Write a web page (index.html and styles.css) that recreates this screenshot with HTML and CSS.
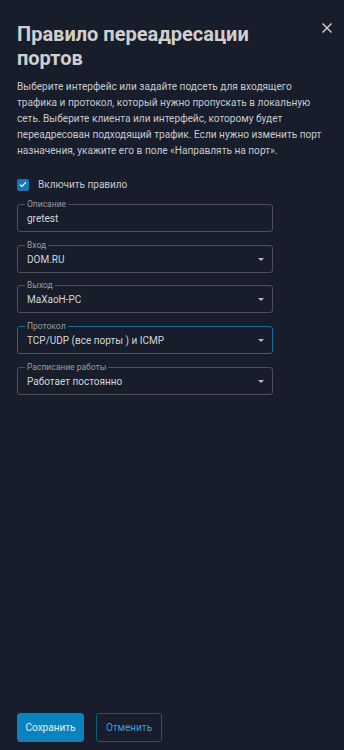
FILE: index.html
```html
<!DOCTYPE html>
<html lang="ru">
<head>
<meta charset="utf-8">
<link rel="stylesheet" href="styles.css">
</head>
<body>
<div class="dialog">
  <button class="close" aria-label="Закрыть">
    <svg width="10" height="10" viewBox="0 0 10 10"><path d="M1 1L9 9M9 1L1 9" stroke="#c9cbd0" stroke-width="1.5" stroke-linecap="square"/></svg>
  </button>
  <h1 class="title">Правило переадресации портов</h1>
  <p class="desc">Выберите интерфейс или задайте подсеть для входящего трафика и протокол, который нужно пропускать в локальную сеть. Выберите клиента или интерфейс, которому будет переадресован подходящий трафик. Если нужно изменить порт назначения, укажите его в поле «Направлять на порт».</p>

  <label class="check">
    <span class="box"><svg width="8" height="7" viewBox="0 0 8 7"><path d="M1 3.6L3 5.5L7 1.2" fill="none" stroke="#fff" stroke-width="1.2"/></svg></span>
    <span class="check-label">Включить правило</span>
  </label>

  <div class="fields">
    <div class="field">
      <span class="legend">Описание</span>
      <span class="value">gretest</span>
    </div>
    <div class="field select">
      <span class="legend">Вход</span>
      <span class="value">DOM.RU</span>
      <span class="arrow"></span>
    </div>
    <div class="field select">
      <span class="legend">Выход</span>
      <span class="value">MaXaoH-PC</span>
      <span class="arrow"></span>
    </div>
    <div class="field select focused">
      <span class="legend">Протокол</span>
      <span class="value">TCP/UDP (все порты ) и ICMP</span>
      <span class="arrow"></span>
    </div>
    <div class="field select">
      <span class="legend">Расписание работы</span>
      <span class="value">Работает постоянно</span>
      <span class="arrow"></span>
    </div>
  </div>

  <div class="spacer"></div>

  <div class="actions">
    <button class="btn primary">Сохранить</button>
    <button class="btn outline">Отменить</button>
  </div>
</div>
</body>
</html>
```

FILE: styles.css
```css
* { box-sizing: border-box; }
html, body {
  margin: 0;
  padding: 0;
  background: #171d2a;
  font-family: Roboto, "Noto Sans", sans-serif;
}
.dialog {
  position: relative;
  height: 750px;
  padding: 22px 17px 8px 17px;
  display: flex;
  flex-direction: column;
}
.close {
  position: absolute;
  top: 23px;
  right: 12px;
  width: 10px;
  height: 10px;
  padding: 0;
  border: 0;
  background: none;
  display: flex;
}
.title {
  margin: 0;
  width: 270px;
  font-size: 20px;
  line-height: 24px;
  font-weight: 700;
  color: #d1cfce;
}
.desc {
  margin: 9px 0 0 0;
  font-size: 10.1px;
  line-height: 16px;
  color: #c9cace;
  width: 312px;
}
.check {
  display: flex;
  align-items: center;
  gap: 9px;
  margin-top: 19.5px;
  height: 12px;
}
.box {
  width: 12px;
  height: 12px;
  border-radius: 2px;
  background: #1777b4;
  display: flex;
  align-items: center;
  justify-content: center;
}
.check-label {
  font-size: 10px;
  color: #c9cace;
}
.fields {
  margin-top: 13.5px;
  display: flex;
  flex-direction: column;
  gap: 12.7px;
  width: 256px;
}
.field {
  position: relative;
  height: 28px;
  border: 1px solid #4a4f59;
  border-radius: 3px;
  display: flex;
  align-items: center;
  padding: 0 0 0 9px;
}
.field.focused {
  border-color: #0f6c9f;
}
.legend {
  position: absolute;
  top: -6px;
  left: 7px;
  padding: 0 2px;
  font-size: 8.5px;
  line-height: 10px;
  color: #9a9ca3;
  background: #171d2a;
}
.value {
  font-size: 10px;
  color: #d4d5d8;
  padding-top: 1px;
}
.arrow {
  position: absolute;
  right: 8px;
  top: 12px;
  width: 0;
  height: 0;
  border-left: 3px solid transparent;
  border-right: 3px solid transparent;
  border-top: 3px solid #b7b8bd;
}
.spacer { flex: 1; }
.actions {
  display: flex;
  gap: 12px;
}
.btn {
  height: 29px;
  border-radius: 3px;
  font-family: Roboto, "Noto Sans", sans-serif;
  font-size: 10px;
  padding: 0;
  width: 67px;
}
.primary {
  background: #0a82bd;
  border: 1px solid #0a82bd;
  color: #e8eef3;
}
.outline {
  width: 66px;
  background: transparent;
  border: 1px solid #0f5a86;
  color: #3e9fd8;
}
```
